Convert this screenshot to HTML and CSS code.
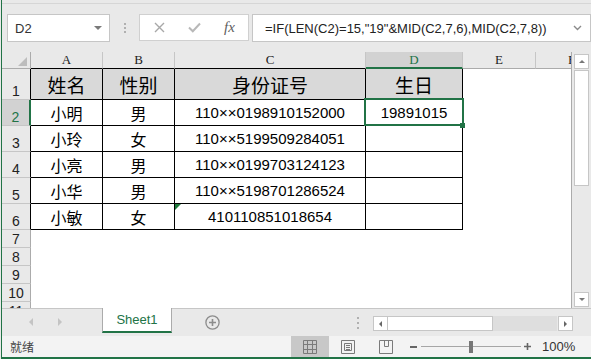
FILE: index.html
```html
<!DOCTYPE html>
<html lang="zh-CN">
<head>
    <meta charset="UTF-8">
    <meta name="viewport" content="width=device-width, initial-scale=1.0">
    <title>工作簿1 - Excel</title>
    <link rel="stylesheet" href="styles.css">
</head>

<body>
    <div id="container">
        <div class="ribbon-edge"></div>

        <!-- 编辑栏 -->
        <div class="formula-view">
            <div class="name-box">D2<span class="caret"></span></div>
            <div class="grip"></div>
            <div class="fx-box">
                <span class="fx-btn">
                    <svg width="11" height="11" viewBox="0 0 11 11"><path d="M1 1L10 10M10 1L1 10" stroke="#a8a8a8" stroke-width="1.4" fill="none"/></svg>
                </span>
                <span class="fx-btn">
                    <svg width="13" height="11" viewBox="0 0 13 11"><path d="M1 5.5L4.8 9.3L12 1.5" stroke="#b8b8b8" stroke-width="2" fill="none"/></svg>
                </span>
                <span class="fx-btn fx">fx</span>
            </div>
            <div class="formula-input">
                <span class="formula-text">=IF(LEN(C2)=15,"19"&amp;MID(C2,7,6),MID(C2,7,8))</span>
                <svg class="chevron" width="9" height="6" viewBox="0 0 9 6"><path d="M1 1L4.5 4.5L8 1" stroke="#8a8a8a" stroke-width="1.4" fill="none"/></svg>
            </div>
        </div>

        <!-- 工作表 -->
        <div class="sheet-view">
            <div class="grid">
                <div class="col-head corner"><span class="select-all"></span></div>
                <div class="col-head bk">A</div>
                <div class="col-head bk">B</div>
                <div class="col-head bk">C</div>
                <div class="col-head active">D</div>
                <div class="col-head">E</div>
                <div class="col-head">F</div>

                <div class="row-head bk">1</div>
                <div class="cell line title">姓名</div>
                <div class="cell line title">性别</div>
                <div class="cell line title">身份证号</div>
                <div class="cell line title">生日</div>
                <div class="cell"></div>
                <div class="cell"></div>

                <div class="row-head active">2</div>
                <div class="cell line han">小明</div>
                <div class="cell line han">男</div>
                <div class="cell line">110××0198910152000</div>
                <div class="cell line">19891015</div>
                <div class="cell"></div>
                <div class="cell"></div>

                <div class="row-head bk">3</div>
                <div class="cell line han">小玲</div>
                <div class="cell line han">女</div>
                <div class="cell line">110××5199509284051</div>
                <div class="cell line"></div>
                <div class="cell"></div>
                <div class="cell"></div>

                <div class="row-head bk">4</div>
                <div class="cell line han">小亮</div>
                <div class="cell line han">男</div>
                <div class="cell line">110××0199703124123</div>
                <div class="cell line"></div>
                <div class="cell"></div>
                <div class="cell"></div>

                <div class="row-head bk">5</div>
                <div class="cell line han">小华</div>
                <div class="cell line han">男</div>
                <div class="cell line">110××5198701286524</div>
                <div class="cell line"></div>
                <div class="cell"></div>
                <div class="cell"></div>

                <div class="row-head bk">6</div>
                <div class="cell line han">小敏</div>
                <div class="cell line han">女</div>
                <div class="cell line warn">410110851018654</div>
                <div class="cell line"></div>
                <div class="cell"></div>
                <div class="cell"></div>

                <div class="row-head">7</div>
                <div class="cell"></div><div class="cell"></div><div class="cell"></div><div class="cell"></div><div class="cell"></div><div class="cell"></div>
                <div class="row-head">8</div>
                <div class="cell"></div><div class="cell"></div><div class="cell"></div><div class="cell"></div><div class="cell"></div><div class="cell"></div>
                <div class="row-head">9</div>
                <div class="cell"></div><div class="cell"></div><div class="cell"></div><div class="cell"></div><div class="cell"></div><div class="cell"></div>
                <div class="row-head">10</div>
                <div class="cell"></div><div class="cell"></div><div class="cell"></div><div class="cell"></div><div class="cell"></div><div class="cell"></div>
                <div class="row-head">11</div>
                <div class="cell"></div><div class="cell"></div><div class="cell"></div><div class="cell"></div><div class="cell"></div><div class="cell"></div>

                <!-- 选中单元格 D2 -->
                <div class="selection"></div>
                <div class="fill-handle"></div>
            </div>

            <div class="v-scroll">
                <div class="sb-btn up"></div>
                <div class="sb-thumb"></div>
                <div class="sb-track"></div>
                <div class="sb-btn down"></div>
            </div>
        </div>

        <!-- 工作表标签 -->
        <div class="tab-view">
            <div class="tab-nav">
                <span class="nav-left"></span>
                <span class="nav-right"></span>
            </div>
            <div class="tab">Sheet1</div>
            <svg class="add-sheet" width="15" height="15" viewBox="0 0 15 15">
                <circle cx="7.5" cy="7.5" r="6.6" stroke="#8c8c8c" stroke-width="1.3" fill="none"/>
                <path d="M7.5 4v7M4 7.5h7" stroke="#8c8c8c" stroke-width="1.6"/>
            </svg>
            <div class="h-scroll">
                <div class="h-grip"></div>
                <div class="h-btn left"></div>
                <div class="h-thumb"></div>
                <div class="h-track"></div>
                <div class="h-btn right"></div>
            </div>
        </div>

        <!-- 状态栏 -->
        <div class="status-view">
            <div class="status-text">就绪</div>
            <div class="view-btn active">
                <svg width="14" height="14" viewBox="0 0 14 14"><path d="M0.5 0.5H13.5V13.5H0.5ZM4.5 0.5V13.5M9.5 0.5V13.5M0.5 4.5H13.5M0.5 9.5H13.5" stroke="#7a7a7a" fill="none"/></svg>
            </div>
            <div class="view-btn">
                <svg width="14" height="14" viewBox="0 0 14 14"><path d="M0.5 0.5H13.5V13.5H0.5ZM3.5 3.5H10.5V10.5H3.5ZM5 5.5H9M5 7.5H9M5 9.5H9" stroke="#7a7a7a" fill="none"/></svg>
            </div>
            <div class="view-btn">
                <svg width="14" height="14" viewBox="0 0 14 14"><path d="M0.5 0.5H13.5V13.5H0.5ZM5.5 0.5V6.5H9.5V0.5" stroke="#7a7a7a" fill="none"/></svg>
            </div>
            <div class="zoom-minus"></div>
            <div class="zoom-slider"><span class="zoom-thumb"></span></div>
            <svg class="zoom-plus" width="7" height="7" viewBox="0 0 7 7"><path d="M3.5 0v7M0 3.5h7" stroke="#666666" stroke-width="1.6"/></svg>
            <div class="zoom-pct">100%</div>
        </div>
    </div>
</body>
</html>
```

FILE: styles.css
```css
html, body {
    width: 591px;
    height: 359px;
    margin: 0;
    overflow: hidden;
    background-color: #e9e9e9;
}

#container {
    display: flex;
    flex-direction: column;
    width: 589px;
    height: 357px;
    margin-left: 1px;
    border-left: 1px solid #217346;
    border-bottom: 2px solid #217346;
    background-color: #e9e9e9;
    font-family: "Liberation Sans", "Noto Sans CJK SC", sans-serif;
    color: #000000;
}

.ribbon-edge {
    height: 3px;
    border-bottom: 1px solid #d6d6d6;
}

/* 编辑栏 */
.formula-view {
    display: flex;
    align-items: flex-start;
    height: 48px;
    padding-top: 10px;
    box-sizing: border-box;
}
.formula-view > .name-box {
    display: flex;
    align-items: center;
    width: 103px;
    height: 28px;
    margin-left: 5px;
    padding-left: 7px;
    box-sizing: border-box;
    border: 1px solid #c6c6c6;
    background-color: #ffffff;
    font-size: 13px;
    color: #333333;
}
.formula-view > .name-box > .caret {
    margin-left: auto;
    margin-right: 7px;
    border-left: 4px solid transparent;
    border-right: 4px solid transparent;
    border-top: 4px solid #7a7a7a;
}
.formula-view > .grip {
    width: 2px;
    height: 10px;
    margin: 9px 13px 0 14px;
    background: repeating-linear-gradient(#b0b0b0 0 2px, transparent 2px 4px);
}
.formula-view > .fx-box {
    display: flex;
    width: 110px;
    height: 27px;
    padding-left: 2px;
    box-sizing: border-box;
    border: 1px solid #d0d0d0;
    background-color: #ffffff;
}
.formula-view > .fx-box > .fx-btn {
    display: flex;
    justify-content: center;
    align-items: center;
    width: 35px;
}
.formula-view > .fx-box > .fx {
    font-family: "Liberation Serif", serif;
    font-style: italic;
    font-size: 15px;
    color: #606060;
}
.formula-view > .formula-input {
    flex: 1;
    display: flex;
    align-items: center;
    height: 28px;
    margin-left: 3px;
    padding-left: 12px;
    box-sizing: border-box;
    border: 1px solid #c6c6c6;
    background-color: #ffffff;
    font-size: 13px;
    color: #222222;
}
.formula-view > .formula-input > .chevron {
    margin-left: auto;
    margin-right: 8px;
}

/* 工作表 */
.sheet-view {
    display: flex;
    height: 256px;
}
.sheet-view > .grid {
    position: relative;
    display: grid;
    grid-template-columns: 29px 72px 72px 191px 97px 73px 72px;
    grid-template-rows: 17px 31px repeat(5, 26px) repeat(5, 18px);
    width: 570px;
    height: 256px;
    box-sizing: border-box;
    border-right: 1px solid #ababab;
    overflow: hidden;
    background-color: #ffffff;
}
.grid > div {
    display: flex;
    justify-content: center;
    align-items: center;
    box-sizing: border-box;
    min-width: 0;
    white-space: nowrap;
}
.grid > .col-head {
    background-color: #e9e9e9;
    border-right: 1px solid #c6c6c6;
    border-bottom: 1px solid #ababab;
    font-family: "Liberation Serif", serif;
    font-size: 13px;
    color: #222222;
}
.grid > .col-head.bk {
    border-bottom-color: #000000;
}
.grid > .col-head.active {
    background-color: #d2d2d2;
    border-bottom: 2px solid #217346;
    color: #217346;
}
.grid > .corner {
    justify-content: flex-end;
    align-items: flex-end;
    padding: 0 3px 2px 0;
    border-right-color: #ababab;
}
.grid > .corner > .select-all {
    border-left: 9px solid transparent;
    border-bottom: 9px solid #bdbdbd;
}
.grid > .row-head {
    align-items: flex-end;
    background-color: #e9e9e9;
    border-right: 1px solid #ababab;
    border-bottom: 1px solid #c6c6c6;
    font-size: 14px;
    line-height: 16px;
    color: #222222;
}
.grid > .row-head.bk {
    border-right-color: #000000;
}
.grid > .row-head.active {
    background-color: #d2d2d2;
    border-right: 2px solid #217346;
    color: #217346;
}
.grid > .cell {
    font-size: 15px;
}
.grid > .cell.line {
    border-right: 1px solid #000000;
    border-bottom: 1px solid #000000;
}
.grid > .cell.title {
    background-color: #d9d9d9;
    font-family: "Noto Sans CJK SC", sans-serif;
    font-size: 19px;
}
.grid > .cell.han {
    font-family: "Noto Sans CJK SC", sans-serif;
    font-size: 16px;
}
.grid > .cell.warn {
    position: relative;
}
.grid > .cell.warn::before {
    content: "";
    position: absolute;
    top: 0;
    left: 0;
    border-top: 6px solid #1e7b3c;
    border-right: 6px solid transparent;
}
.grid > .selection {
    position: absolute;
    left: 362px;
    top: 46px;
    width: 100px;
    height: 28px;
    border: 2px solid #217346;
}
.grid > .fill-handle {
    position: absolute;
    left: 458px;
    top: 71px;
    width: 5px;
    height: 5px;
    background-color: #217346;
}

.sheet-view > .v-scroll {
    display: flex;
    flex-direction: column;
    width: 19px;
    padding: 2px 2px 1px 2px;
    box-sizing: border-box;
}
.v-scroll > .sb-btn {
    display: flex;
    justify-content: center;
    align-items: center;
    height: 15px;
    box-sizing: border-box;
    border: 1px solid #c6c6c6;
    background-color: #ffffff;
}
.v-scroll > .sb-btn.up::after {
    content: "";
    border-left: 3px solid transparent;
    border-right: 3px solid transparent;
    border-bottom: 3px solid #777777;
}
.v-scroll > .sb-btn.down::after {
    content: "";
    border-left: 3px solid transparent;
    border-right: 3px solid transparent;
    border-top: 3px solid #777777;
}
.v-scroll > .sb-thumb {
    height: 116px;
    margin-top: 1px;
    box-sizing: border-box;
    border: 1px solid #c6c6c6;
    background-color: #ffffff;
}
.v-scroll > .sb-track {
    flex: 1;
}

/* 工作表标签 */
.tab-view {
    display: flex;
    align-items: flex-start;
    height: 28px;
    box-sizing: border-box;
    border-top: 1px solid #c6c6c6;
}
.tab-view > .tab-nav {
    display: flex;
    align-items: center;
    width: 100px;
    height: 26px;
    padding-left: 27px;
    box-sizing: border-box;
}
.tab-nav > .nav-left {
    border-top: 4px solid transparent;
    border-bottom: 4px solid transparent;
    border-right: 4px solid #c4c4c4;
}
.tab-nav > .nav-right {
    margin-left: 25px;
    border-top: 4px solid transparent;
    border-bottom: 4px solid transparent;
    border-left: 4px solid #c4c4c4;
}
.tab-view > .tab {
    display: flex;
    justify-content: center;
    align-items: center;
    width: 70px;
    height: 25px;
    margin-top: -1px;
    box-sizing: border-box;
    border-left: 1px solid #ababab;
    border-right: 1px solid #ababab;
    border-bottom: 2px solid #217346;
    background-color: #ffffff;
    font-size: 13px;
    color: #217346;
}
.tab-view > .add-sheet {
    margin: 6px 0 0 33px;
}
.tab-view > .h-scroll {
    display: flex;
    height: 15px;
    margin: 7px 18px 0 auto;
}
.h-scroll > .h-grip {
    width: 2px;
    height: 12px;
    margin: 1px 14px 0 0;
    background: repeating-linear-gradient(#b0b0b0 0 2px, transparent 2px 5px);
}
.h-scroll > .h-btn {
    display: flex;
    justify-content: center;
    align-items: center;
    width: 15px;
    box-sizing: border-box;
    border: 1px solid #c6c6c6;
    background-color: #ffffff;
}
.h-scroll > .h-btn.left::after {
    content: "";
    border-top: 3px solid transparent;
    border-bottom: 3px solid transparent;
    border-right: 3px solid #666666;
}
.h-scroll > .h-btn.right::after {
    content: "";
    border-top: 3px solid transparent;
    border-bottom: 3px solid transparent;
    border-left: 3px solid #666666;
}
.h-scroll > .h-thumb {
    width: 105px;
    box-sizing: border-box;
    border: 1px solid #c6c6c6;
    border-left: none;
    background-color: #ffffff;
}
.h-scroll > .h-track {
    width: 64px;
    margin-right: 1px;
    background-color: #dedede;
}

/* 状态栏 */
.status-view {
    display: flex;
    height: 21px;
    background-color: #f3f3f3;
}
.status-view > .status-text {
    flex: 1;
    display: flex;
    align-items: center;
    padding-left: 8px;
    font-family: "Noto Sans CJK SC", sans-serif;
    font-size: 12px;
    color: #444444;
}
.status-view > .view-btn {
    display: flex;
    justify-content: center;
    align-items: center;
    width: 38px;
}
.status-view > .view-btn.active {
    background-color: #c8c8c8;
}
.status-view > .zoom-minus {
    align-self: center;
    width: 7px;
    height: 2px;
    margin: 0 4px 0 5px;
    background-color: #666666;
}
.status-view > .zoom-slider {
    position: relative;
    width: 100px;
}
.status-view > .zoom-slider::before {
    content: "";
    position: absolute;
    left: 0;
    right: 0;
    top: 10px;
    height: 1px;
    background-color: #a6a6a6;
}
.zoom-slider > .zoom-thumb {
    position: absolute;
    left: 48px;
    top: 5px;
    width: 4px;
    height: 12px;
    background-color: #777777;
}
.status-view > .zoom-plus {
    align-self: center;
    margin-left: 3px;
}
.status-view > .zoom-pct {
    display: flex;
    align-items: center;
    width: 33px;
    margin: 0 16px 0 11px;
    font-size: 13px;
    color: #333333;
}
```
